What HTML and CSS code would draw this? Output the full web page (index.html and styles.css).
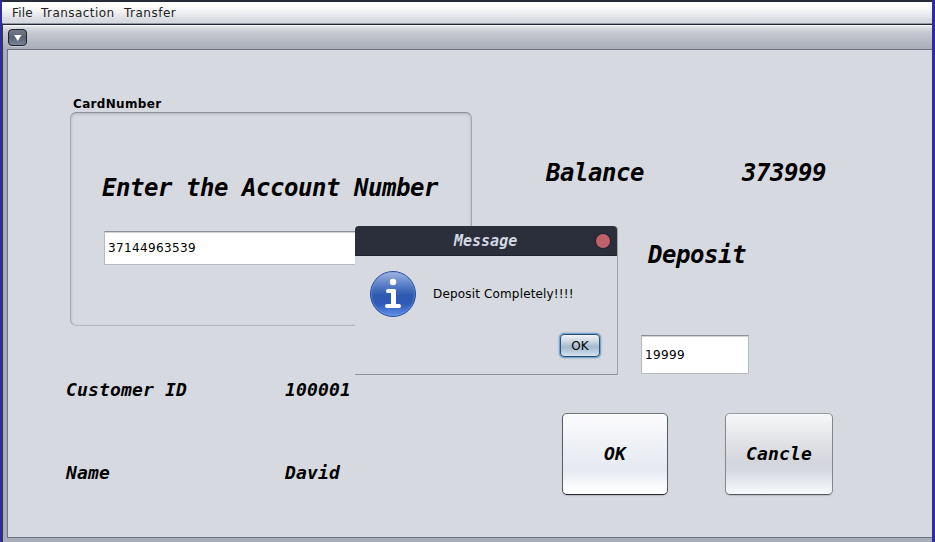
FILE: index.html
```html
<!DOCTYPE html>
<html lang="en">
<head>
<meta charset="utf-8">
<title>Deposit</title>
<link rel="stylesheet" href="styles.css">
</head>
<body>
<div class="desktop">
  <nav class="menubar"><span class="file">File</span><span class="transaction">Transaction</span><span class="transfer">Transfer</span></nav>
  <main class="frame">
    <header class="titlebar">
      <svg class="menu-button" width="20" height="18" viewBox="0 0 20 18">
        <defs><linearGradient id="mb" x2="0" y2="1"><stop offset="0" stop-color="#747b87"/><stop offset=".5" stop-color="#596273"/><stop offset="1" stop-color="#7b8799"/></linearGradient></defs>
        <rect x=".5" y="1" width="18" height="16.5" rx="3.5" fill="none" stroke="#dfe2e8" stroke-opacity=".5"/>
        <rect x=".5" y=".5" width="18" height="16" rx="3.5" fill="url(#mb)" stroke="#1e242e"/>
        <path d="M6 6h7.5l-3.75 6z" fill="#fff"/>
      </svg>
    </header>
    <div class="content">
      <section class="customer">
        <h2 class="legend">CardNumber</h2>
        <div class="card">
          <label class="large prompt">Enter the Account Number</label>
          <div class="field account">37144963539</div>
        </div>
        <dl class="details">
          <dt>Customer ID</dt><dd>100001</dd>
          <dt>Name</dt><dd>David</dd>
        </dl>
      </section>
      <section class="deposit">
        <div class="balance large"><span>Balance</span><span>373999</span></div>
        <div class="large deposit-label">Deposit</div>
        <div class="field amount">19999</div>
        <div class="actions"><button class="action ok">OK</button><button class="action cancel">Cancle</button></div>
      </section>
    </div>
  </main>
  <div class="dialog" role="dialog">
    <header class="dialog-title"><span>Message</span><i class="close"></i></header>
    <div class="dialog-body">
      <svg width="48" height="48" viewBox="0 0 48 48">
        <defs><linearGradient id="info" x2="0" y2="1"><stop offset="0" stop-color="#a2b7e1"/><stop offset=".28" stop-color="#5f82ca"/><stop offset=".53" stop-color="#2d59b0"/><stop offset=".72" stop-color="#2e5bb8"/><stop offset="1" stop-color="#6390e8"/></linearGradient></defs>
        <circle cx="24" cy="24" r="22.5" fill="url(#info)" stroke="#234a9d"/>
        <circle cx="24" cy="24" r="21.5" fill="none" stroke="#7fa2e6" stroke-opacity=".45"/>
        <circle cx="24" cy="12" r="3.2" fill="#fff"/>
        <path d="M19 19h6.5q1.5 0 1.500 1.500V34h3a2 2 0 0 1 0 4H18a2 2 0 0 1 0-4h4V23h-3a2 2 0 0 1 0-4z" fill="#fff"/>
      </svg>
      <span>Deposit Completely!!!!</span>
    </div>
    <button class="confirm">OK</button>
  </div>
</div>
</body>
</html>
```
FILE: styles.css
```css
* { box-sizing: border-box; }
body { margin: 0; font: 12px/16px "DejaVu Sans", sans-serif; color: #000; }
button { font-family: inherit; color: inherit; padding: 0; }
.desktop {
  position: relative; width: 935px; height: 542px; overflow: hidden;
  display: flex; flex-direction: column;
  background: #d6d9df; border-left: 2px solid #2d2d9c; border-right: 3px solid #2d2d9c;
}
.menubar {
  height: 23px; flex: none; display: flex; padding-left: 10px; line-height: 22px; color: #232323;
  border-top: 2px solid #282c38;
  background: linear-gradient(#fff 15%, #f1f2f3 45%, #d9dbe0 85%, #d6d9df);
  white-space: nowrap;
}
.file { width: 29px; letter-spacing: .15px; }
.transaction { width: 83px; letter-spacing: .45px; }
.transfer { letter-spacing: .5px; }
.frame {
  height: 519px; flex: none; display: flex; flex-direction: column;
  border-top: 1px solid #9298a2; border-left: 1px solid #343944;
  background: #a8adba; padding-bottom: 1px;
}
.titlebar {
  height: 25px; flex: none; padding: 4px 0 0 5px;
  border-top: 1px solid #242933;
  background: linear-gradient(#f2f4f5 0 1px, #dcdfe2 2px, #c5c8d0 8px, #a9adb9);
}
.menu-button { display: block; }
.content {
  height: 489px; flex: none; margin-left: 4px; display: flex;
  background: #d6d9df; border: 1px solid #6c727e; border-right: 0;
}
.customer { width: 464px; padding: 47px 0 0 58px; }
.legend { margin: 0 0 0 7px; font-size: 12px; line-height: 15px; letter-spacing: .33px; }
.card {
  width: 402px; height: 214px; margin-left: 4px; padding: 61px 0 0 32px;
  border: 1px solid #a4a6aa; border-top-color: #8f9195; border-bottom-color: #b6b8bc; border-radius: 6px;
  box-shadow: inset 0 1px 3px #aeb1b6;
}
.large { font: italic bold 24px/28px "DejaVu Sans Mono", monospace; letter-spacing: -.45px; white-space: nowrap; }
.prompt { display: block; margin-left: -1px; }
.field {
  background: #fff; border: 1px solid #b7b9bd; border-top-color: #8c8e92;
  box-shadow: inset 0 1px 1px #d0d1d3; padding-left: 3px; letter-spacing: .37px;
}
.account { width: 336px; height: 34px; margin-top: 29px; line-height: 32px; margin-left: 1px; }
.details {
  display: grid; grid-template-columns: 219px auto; grid-template-rows: 83px 24px;
  margin: 52px 0 0; font: italic bold 18px/24px "DejaVu Sans Mono", monospace; letter-spacing: .16px;
}
.details dd { margin: 0; }
.deposit { width: 460px; padding: 109px 0 0 65px; }
.balance { display: flex; margin-left: 9px; }
.balance span:first-child { width: 196px; }
.deposit-label { margin: 54px 0 0 111px; }
.amount { width: 108px; height: 39px; margin: 66px 0 0 104px; line-height: 38px; }
.actions { display: flex; gap: 57px; margin: 39px 0 0 25px; }
.action {
  width: 106px; height: 82px; font: italic bold 18px/22px "DejaVu Sans Mono", monospace; letter-spacing: .16px;
  border: 1px solid; border-radius: 5px; box-shadow: 0 1px 1px #b9bcc2;
}
.ok { border-color: #747780 #555a64 #20242d; background: linear-gradient(#fcfcfd, #eceff4 45%, #e6e9f1 70%, #fbfcfd 92%, #fff); }
.cancel { width: 108px; border-color: #999ca1 #85888e #555961; background: linear-gradient(#f7f8f9, #e5e6e9 28%, #d4d6dd 60%, #d5d8df 70%, #eceff3 90%, #f7f9fb); }
.dialog {
  position: absolute; left: 353px; top: 226px; width: 263px; height: 149px;
  background: #d6d9df; border-right: 1px solid #9fa1a5; border-bottom: 1px solid #929498; border-radius: 4px 4px 0 0;
}
.dialog-title {
  height: 30px; width: 262px; display: flex; align-items: center; justify-content: space-between; padding: 0 7px 0 99px;
  background: #2b2e3b; color: #d3dae3; border-radius: 4px 4px 0 0; border-bottom: 1px solid #20232e;
  font: italic bold 15px/28px "DejaVu Sans Mono", monospace;
}
.close { width: 14px; height: 14px; border-radius: 50%; background: #bf616a; box-shadow: 0 0 0 1px #232631; }
.dialog-body { display: flex; align-items: center; gap: 16px; padding: 14px 0 0 14px; height: 62px; white-space: nowrap; letter-spacing: .16px; }
.dialog-body span { margin-top: -1px; }
.confirm {
  display: block; width: 40px; height: 23px; margin: 16px 0 0 205px; font-size: 12px; line-height: 20px;
  border: 1px solid #2f4d6c; border-radius: 4px; box-shadow: 0 0 0 1px #73a4d1, 0 0 2px 1px #73a4d1;
  background: linear-gradient(#f0f4f7, #c5d2dd 35%, #a3b8cb 58%, #c7d9e9 90%, #d5e5f2);
}
```
